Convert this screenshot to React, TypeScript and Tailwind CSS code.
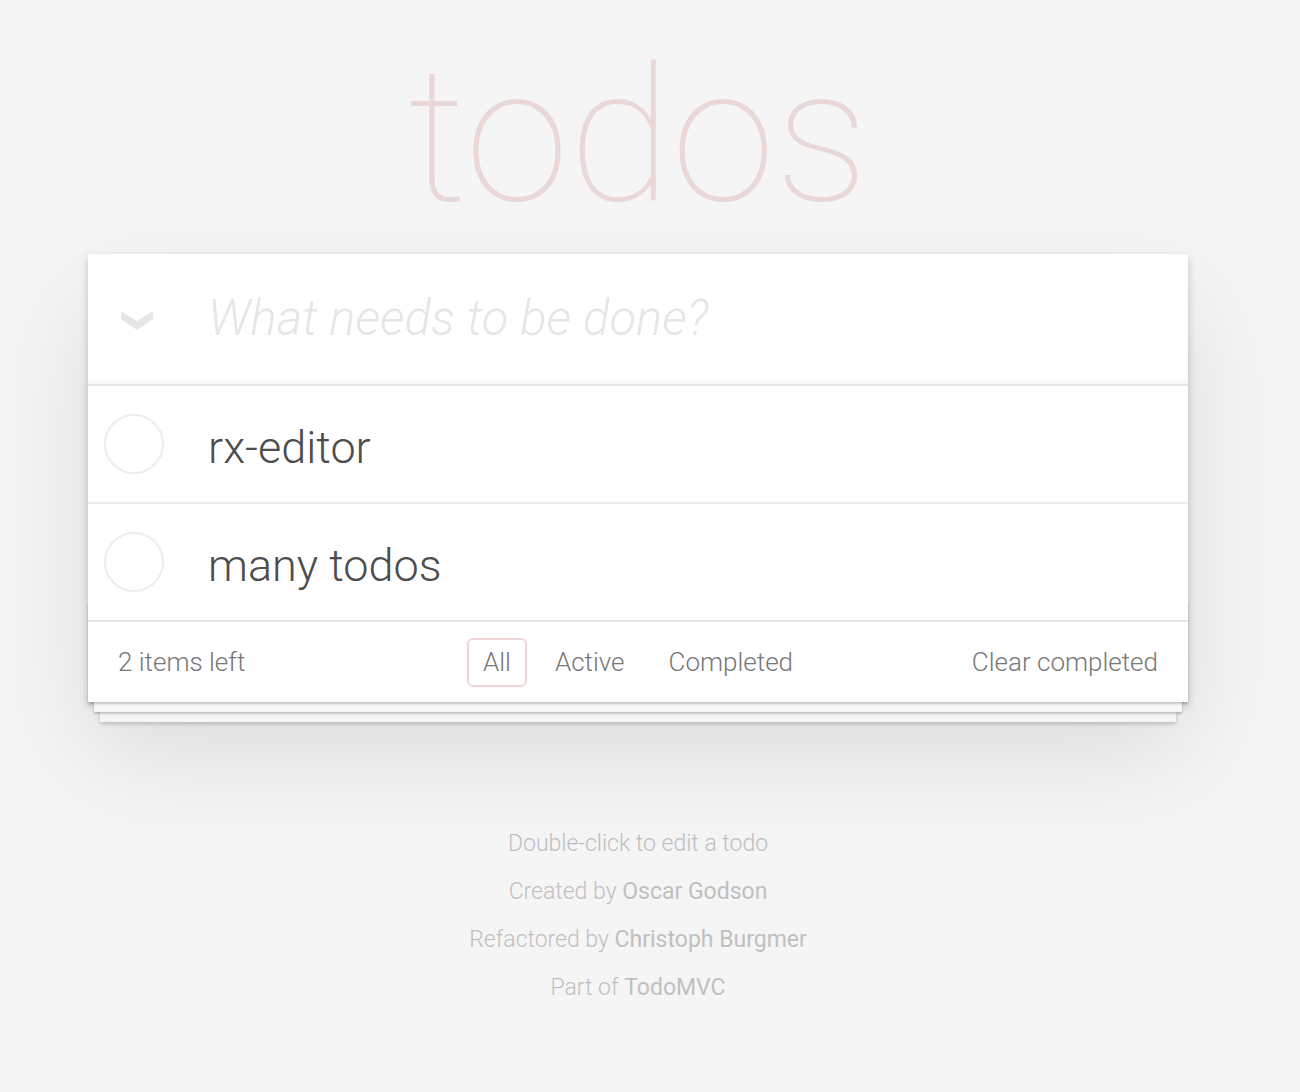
import { useState } from "react";

type Todo = { id: number; title: string; completed: boolean };

const FILTERS = ["All", "Active", "Completed"];

const FONT = { fontFamily: "Roboto, 'Helvetica Neue', 'Liberation Sans', sans-serif" };

function Chevron() {
  return (
    <svg width="32" height="19" viewBox="0 0 32 19" className="block">
      <polygon points="0,0 16,10 32,0 32,8 16,19 0,8" fill="#e6e6e6" />
    </svg>
  );
}

function TodoRow({ todo, last }: { todo: Todo; last: boolean }) {
  return (
    <li
      className={
        last
          ? "h-[116px] flex items-center"
          : "h-[118px] flex items-center border-b-2 border-[#ededed]"
      }
    >
      <div className="w-[120px] shrink-0 flex items-center pl-[16px]">
        <span className="block w-[60px] h-[60px] rounded-full border-2 border-[#ededed]" />
      </div>
      <label className="pt-[6px] text-[45px] leading-none font-light text-[#4d4d4d] whitespace-nowrap">
        {todo.title}
      </label>
    </li>
  );
}

export default function App() {
  const [todos] = useState<Todo[]>([
    { id: 1, title: "rx-editor", completed: false },
    { id: 2, title: "many todos", completed: false },
  ]);
  const [filter, setFilter] = useState("All");
  const left = todos.filter((t) => !t.completed).length;

  return (
    <div className="min-h-[1092px] bg-[#f5f5f5] antialiased" style={FONT}>
      <div className="w-[1276px]">
        <h1 className="h-[254px] pt-[42px] text-center text-[188px] leading-[188px] font-thin text-[rgba(175,47,47,0.15)]">
          todos
        </h1>

        <section className="relative mx-auto w-[1100px] bg-white shadow-[0_4px_8px_0_rgba(0,0,0,0.2),0_50px_100px_0_rgba(0,0,0,0.1)]">
          <header className="h-[130px] flex items-center shadow-[inset_0_-4px_2px_rgba(0,0,0,0.03)]">
            <div className="w-[120px] shrink-0 flex pl-[33px] pt-[2px]">
              <Chevron />
            </div>
            <input
              className="flex-1 bg-transparent outline-none text-[49px] italic font-light text-[#4d4d4d] placeholder:text-[#e6e6e6]"
              placeholder="What needs to be done?"
            />
          </header>

          <ul className="border-t-2 border-[#e6e6e6]">
            {todos.map((t, i) => (
              <TodoRow key={t.id} todo={t} last={i === todos.length - 1} />
            ))}
          </ul>

          <footer className="relative h-[82px] border-t-2 border-[#e6e6e6] px-[30px] grid grid-cols-[1fr_auto_1fr] items-center text-[26px] font-light text-[#777777]">
            <div className="absolute left-0 right-0 bottom-0 h-[100px] pointer-events-none shadow-[0_2px_2px_rgba(0,0,0,0.2),0_16px_0_-6px_#f6f6f6,0_18px_2px_-6px_rgba(0,0,0,0.2),0_32px_0_-12px_#f6f6f6,0_34px_4px_-12px_rgba(0,0,0,0.2)]" />
            <span className="relative">{left} items left</span>
            <ul className="relative flex items-center gap-[12px]">
              {FILTERS.map((f) => (
                <li key={f}>
                  <button
                    onClick={() => setFilter(f)}
                    className={
                      f === filter
                        ? "px-[14px] py-[6px] leading-[33px] rounded-[6px] border-2 border-[rgba(175,47,47,0.2)]"
                        : "px-[14px] py-[6px] leading-[33px] rounded-[6px] border-2 border-transparent"
                    }
                  >
                    {f}
                  </button>
                </li>
              ))}
            </ul>
            <button className="relative justify-self-end">Clear completed</button>
          </footer>
        </section>

        <footer className="mt-[130px] flex flex-col items-center gap-[24px] text-[23px] leading-[24px] font-light text-[#bfbfbf] [text-shadow:0_1px_0_rgba(255,255,255,0.5)]">
          <p>Double-click to edit a todo</p>
          <p>
            Created by <a className="font-normal">Oscar Godson</a>
          </p>
          <p>
            Refactored by <a className="font-normal">Christoph Burgmer</a>
          </p>
          <p>
            Part of <a className="font-normal">TodoMVC</a>
          </p>
        </footer>
      </div>
    </div>
  );
}
